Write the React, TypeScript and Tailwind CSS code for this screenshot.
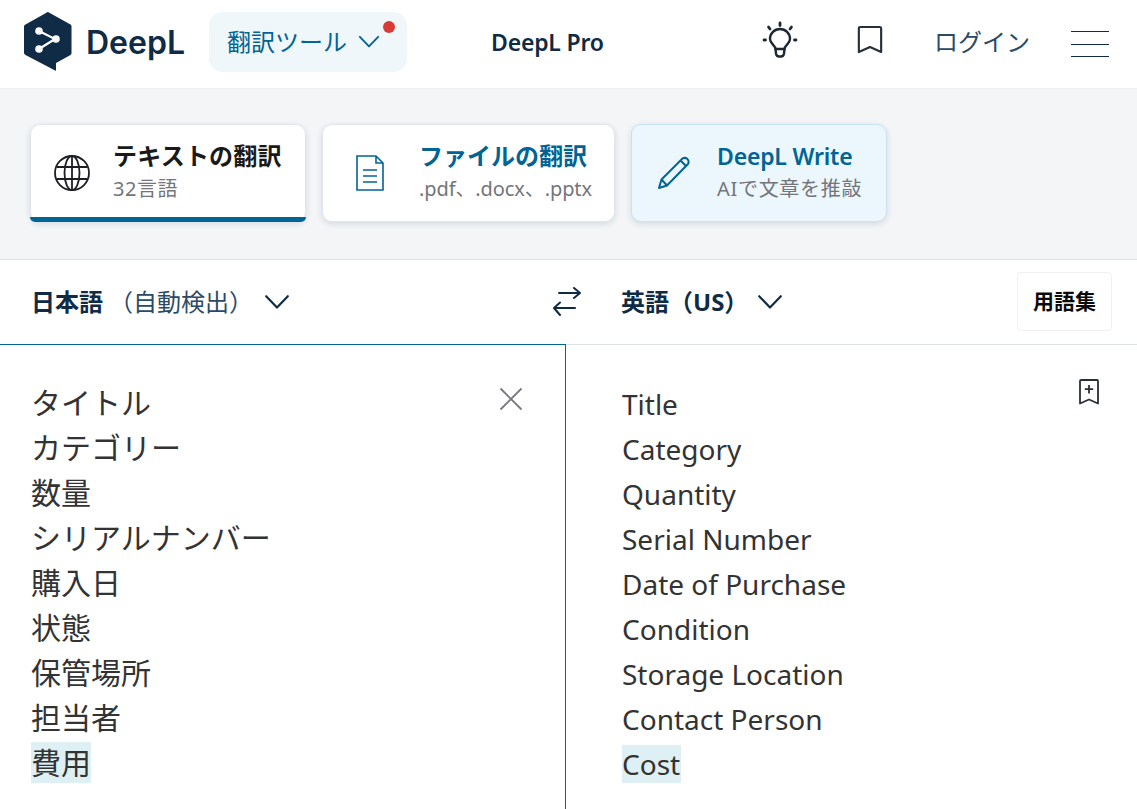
const F = '[font-family:"Noto_Sans","Noto_Sans_CJK_JP",sans-serif]';

function Logo() {
  return (
    <svg width="48" height="59" viewBox="0 0 48 59" className="shrink-0 -mt-[5px]">
      <path d="M24 0 L46.500 12.500 Q47.500 13 47.500 14.500 L47.500 41 Q47.500 42.500 46.500 43 L32 51 L32 58 Q32 59 31 58.500 L24.500 55 L1.500 43 Q0 42 0 41 L0 14.500 Q0 13 1.500 12.500 L22 1 Q23 0 24 0 Z" fill="#0f2b46" />
      <path d="M15 19 L31 27 L15 37" fill="none" stroke="#fff" strokeWidth="2.200" />
      <circle cx="15" cy="19" r="3.800" fill="#fff" />
      <circle cx="32" cy="27" r="3.800" fill="#fff" />
      <circle cx="15" cy="37" r="3.800" fill="#fff" />
    </svg>
  );
}

function Chevron({ w = 24, color = "#0f2b46" }: { w?: number; color?: string }) {
  return (
    <svg width={w} height={w * 0.6} viewBox="0 0 24 14.400" fill="none" stroke={color} strokeWidth="2" strokeLinecap="round" strokeLinejoin="round">
      <path d="M2 2 L12 12.500 L22 2" />
    </svg>
  );
}

function Bulb() {
  return (
    <svg width="36" height="38" viewBox="0 0 36 38" fill="none" stroke="#1d2733" strokeWidth="2.400" strokeLinecap="round" strokeLinejoin="round" className="-mt-[2px]">
      <path d="M13.500 28 C13.500 24.500 8 23 8 18 A10 10 0 0 1 28 18 C28 23 22.500 24.500 22.500 28 Z" />
      <path d="M13.500 28 L14 32.500 Q14.500 35.500 17 35.500 L19 35.500 Q21.500 35.500 22 32.500 L22.500 28" />
      <path d="M18 2 L18 4.500 M6.500 6 L8 8 M29.500 6 L28 8 M2 19 L3.500 19 M32.500 19 L34 19" strokeWidth="2.800" />
    </svg>
  );
}

function TabCard({ title, sub, icon, titleCls, subCls, w, bg, active }: { title: string; sub: string; icon: React.ReactNode; titleCls: string; subCls: string; w: string; bg: string; active?: boolean }) {
  return (
    <div className={`${w} ${bg} h-[98px] rounded-[10px] border shadow-[0_2px_6px_rgba(30,60,90,0.14)] flex items-center relative`}>
      {icon}
      <div className="flex flex-col mb-[2px]">
        <span className={`text-[24px] leading-[32px] pb-[2px] font-bold whitespace-nowrap ${titleCls}`}>{title}</span>
        <span className={`text-[20px] leading-[30px] text-[#74757a] whitespace-nowrap ${subCls}`}>{sub}</span>
      </div>
      {active && <div className="absolute -left-[1px] -right-[1px] -bottom-[1px] h-[5px] rounded-b-[8px] bg-[#006494]" />}
    </div>
  );
}

const left = ["タイトル", "カテゴリー", "数量", "シリアルナンバー", "購入日", "状態", "保管場所", "担当者"];
const right = ["Title", "Category", "Quantity", "Serial Number", "Date of Purchase", "Condition", "Storage Location", "Contact Person"];

export default function App() {
  return (
    <div className={`${F} w-[1137px] h-[809px] overflow-hidden bg-white flex flex-col`}>
      <header className="h-[89px] shrink-0 border-b border-[#eff1f3] flex items-center pl-[24px] relative">
        <Logo />
        <span className="ml-[14px] w-[99px] text-[32px] font-semibold text-[#0f2b46] [font-family:Inter,sans-serif] leading-none -mt-[3px]">DeepL</span>
        <div className="relative ml-[24px] w-[198px] h-[60px] rounded-[14px] bg-[#eff7fa] flex items-center pl-[18px] mt-[-4px]">
          <span className="text-[24px] text-[#006494] whitespace-nowrap">翻訳ツール</span>
          <span className="ml-[11px]"><Chevron w={22} color="#006494" /></span>
          <span className="absolute top-[9px] left-[174px] w-[12px] h-[12px] rounded-full bg-[#da3a36]" />
        </div>
        <span className="ml-[84px] text-[23px] font-semibold text-[#0f2b46] tracking-[-0.2px] mt-[-3px]">DeepL Pro</span>
        <div className="ml-auto flex items-center mt-[-6px] pr-[28px]">
          <Bulb />
          <svg width="26" height="30" viewBox="0 0 28 32" fill="none" stroke="#262f3a" strokeWidth="2.300" strokeLinejoin="round" className="ml-[59px] -mt-[2px]">
            <path d="M2 3.500 Q2 2 3.500 2 L24.500 2 Q26 2 26 3.500 L26 29 L14 23.500 L2 29 Z" />
          </svg>
          <span className="ml-[51px] text-[24px] text-[#2a4a68] whitespace-nowrap mt-[2px]">ログイン</span>
          <div className="ml-[41px] w-[38px] h-[26px] flex flex-col justify-between mt-[6px]">
            <span className="block h-[1px] bg-[#0f2b46]" />
            <span className="block h-[1px] bg-[#0f2b46]" />
            <span className="block h-[1px] bg-[#0f2b46]" />
          </div>
        </div>
      </header>

      <section className="h-[171px] shrink-0 bg-[#f3f5f7] border-b border-[#dde2e8] flex items-start pt-[35px] pl-[30px] gap-[17px]">
        <TabCard
          w="w-[276px]" bg="bg-white border-[#e2e6ec]" active
          title="テキストの翻訳" sub="32言語" titleCls="text-[#1a1a1a] tracking-[0.2px]" subCls="tracking-[0.5px]"
          icon={
            <svg width="36" height="36" viewBox="0 0 36 36" fill="none" stroke="#1d1f24" strokeWidth="1.800" className="ml-[23px] mr-[23px] shrink-0">
              <circle cx="18" cy="18" r="17" />
              <ellipse cx="18" cy="18" rx="7.500" ry="17" />
              <path d="M2.500 12 L33.500 12 M2.500 24 L33.500 24 M18 1 L18 35" />
            </svg>
          }
        />
        <div className="-ml-[1px]">
          <TabCard
            w="w-[293px]" bg="bg-white border-[#e2e6ec]"
            title="ファイルの翻訳" sub=".pdf、.docx、.pptx" titleCls="text-[#006494]" subCls="tracking-[-0.1px]"
            icon={
              <svg width="28" height="36" viewBox="0 0 28 36" fill="none" stroke="#006494" strokeWidth="1.600" className="ml-[33px] mr-[35px] shrink-0">
                <path d="M1 1 L20 1 L27 8 L27 35 L1 35 Z M20 1 L20 8 L27 8" />
                <path d="M7 15 L21 15 M7 21 L21 21 M7 27 L21 27" />
              </svg>
            }
          />
        </div>
        <div className="-ml-[1px]">
          <TabCard
            w="w-[256px]" bg="bg-[#ebf7fd] border-[#c6e4f1]"
            title="DeepL Write" sub="AIで文章を推敲" titleCls="text-[#006494] !text-[23px] !font-semibold tracking-[-0.2px]" subCls="tracking-[0.7px]"
            icon={
              <svg width="34" height="34" viewBox="0 0 34 34" fill="none" stroke="#006494" strokeWidth="2" strokeLinejoin="round" className="ml-[25px] mr-[26px] shrink-0">
                <path d="M2 32 L4.500 23.500 L25.500 2.500 Q28 1 30.500 3 Q32.500 5.500 31 8 L10 29.500 Z" />
                <path d="M4.500 23.500 L10 29.500 M23.500 4.500 L29 10" />
              </svg>
            }
          />
        </div>
      </section>

      <section className="h-[85px] shrink-0 border-b border-[#dde2e8] flex items-center relative">
        <div className="w-[566px] shrink-0 flex items-center pl-[31px]">
          <span className="text-[24px] font-bold text-[#0f2b46] whitespace-nowrap">日本語</span>
          <span className="ml-[6px] text-[24px] text-[#2a4a68] whitespace-nowrap">（自動検出）</span>
          <span className="ml-[11px]"><Chevron w={26} /></span>
          <svg width="28" height="31" viewBox="0 0 28 31" fill="none" stroke="#0f2b46" strokeWidth="2" strokeLinecap="round" strokeLinejoin="round" className="ml-auto mr-[-15px]">
            <path d="M6 6 L27 6 M21 1 L27 6 L21 11" />
            <path d="M22 21 L1 21 M7 15.500 L1 21 L7 28" />
          </svg>
        </div>
        <div className="flex items-center pl-[55px]">
          <span className="text-[24px] font-bold text-[#0f2b46] whitespace-nowrap">英語（US）</span>
          <span className="ml-[9px]"><Chevron w={26} /></span>
        </div>
        <div className="ml-auto mr-[25px] w-[95px] h-[59px] rounded-[4px] border border-[#eef0f3] flex items-center justify-center text-[21px] font-bold text-[#0b0b0b] mt-[-1px]">
          用語集
        </div>
      </section>

      <main className="flex flex-1 min-h-0">
        <div className="w-[566px] shrink-0 border-t border-r border-[#006494] -mt-[1px] pl-[31px] pt-[35px] relative text-[30px] leading-[45px] text-[#333333]">
          {left.map((t) => <div key={t} className="whitespace-nowrap">{t}</div>)}
          <div><span className="bg-[#dff0f5]">費用</span></div>
          <svg width="24" height="24" viewBox="0 0 24 24" fill="none" stroke="#74797f" strokeWidth="1.800" className="absolute left-[499px] top-[42px]">
            <path d="M1.500 1.500 L22.500 22.500 M22.500 1.500 L1.500 22.500" />
          </svg>
        </div>
        <div className="flex-1 pl-[56px] pt-[37px] relative text-[28px] leading-[45px] text-[#333333]">
          {right.map((t) => <div key={t} className="whitespace-nowrap">{t}</div>)}
          <div><span className="bg-[#dff0f5] pr-[1px]">Cost</span></div>
          <svg width="22" height="26" viewBox="0 0 22 26" fill="none" stroke="#2a2f36" strokeWidth="1.800" strokeLinejoin="round" className="absolute left-[512px] top-[34px]">
            <path d="M2 2 Q2 1 3 1 L19 1 Q20 1 20 2 L20 24.500 L11 20.500 L2 24.500 Z" />
            <path d="M11 6 L11 14.500 M6.800 10.200 L15.200 10.200" />
          </svg>
        </div>
      </main>
    </div>
  );
}
